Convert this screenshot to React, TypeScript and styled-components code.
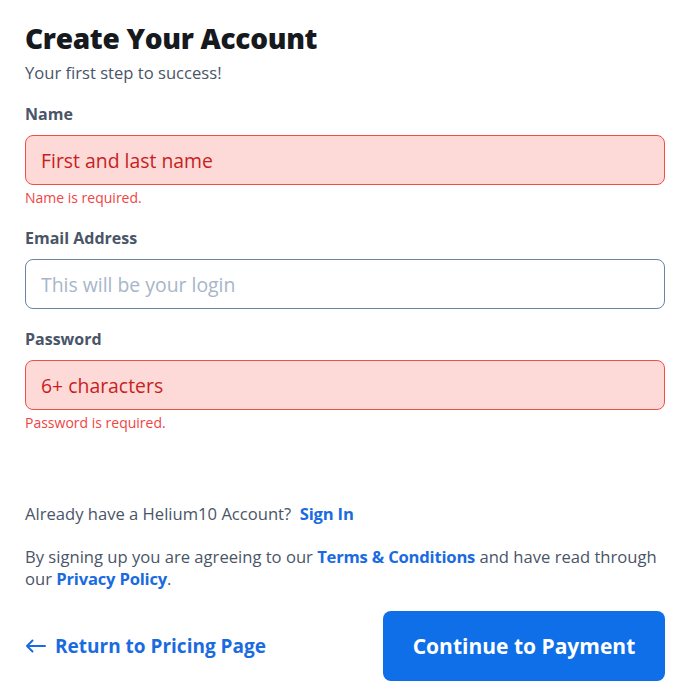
import React from "react";
import styled, { createGlobalStyle } from "styled-components";

const Global = createGlobalStyle`
  html, body { margin: 0; padding: 0; background: #ffffff; }
  body { font-family: "Open Sans", "Noto Sans", sans-serif; -webkit-font-smoothing: antialiased; }
  * { box-sizing: border-box; }
`;

const Page = styled.div`
  width: 691px;
  padding: 20px 26px 0 25px;
  display: flex;
  flex-direction: column;
`;

const Title = styled.h1`
  margin: 0;
  font-size: 28px;
  line-height: 36px;
  font-weight: 800;
  letter-spacing: -0.3px;
  color: #16191d;
`;

const Subtitle = styled.p`
  margin: 6px 0 0;
  font-size: 16.6px;
  line-height: 22px;
  color: #4a5568;
`;

const Form = styled.div`
  margin-top: 19px;
  display: flex;
  flex-direction: column;
`;

const Field = styled.div`
  display: flex;
  flex-direction: column;
  margin-bottom: 19px;
`;

const Label = styled.label`
  font-size: 16px;
  line-height: 22px;
  font-weight: 700;
  color: #4a5568;
  margin-bottom: 10px;
`;

const Input = styled.input<{ $error?: boolean }>`
  width: 100%;
  height: 50px;
  border-radius: 8px;
  border: 1px solid ${(p) => (p.$error ? "#ee5046" : "#6b84a3")};
  background: ${(p) => (p.$error ? "#fddad8" : "#ffffff")};
  padding: 0 15px;
  font-family: inherit;
  font-size: 19.4px;
  color: #2d3748;
  outline: none;
  &::placeholder {
    color: ${(p) => (p.$error ? "#c81e1e" : "#a7b6c8")};
    opacity: 1;
  }
`;

const ErrorText = styled.div`
  margin-top: 3px;
  font-size: 14px;
  line-height: 20px;
  color: #ef4444;
`;

const Text = styled.p<{ $top: number }>`
  margin: ${(p) => p.$top}px 0 0;
  font-size: 16.6px;
  line-height: 22px;
  color: #4a5568;
`;

const Link = styled.a`
  color: #1a6be0;
  font-weight: 700;
  font-size: inherit;
  letter-spacing: -0.2px;
  text-decoration: none;
`;

const Footer = styled.div`
  margin-top: 21px;
  display: flex;
  align-items: center;
  justify-content: space-between;
`;

const BackLink = styled.a`
  display: flex;
  align-items: center;
  gap: 9px;
  color: #1a6be0;
  font-size: 19px;
  font-weight: 700;
  text-decoration: none;
`;

const PrimaryButton = styled.button`
  width: 282px;
  height: 70px;
  border: none;
  border-radius: 8px;
  background: #0e6fe8;
  color: #ffffff;
  font-family: inherit;
  font-size: 21px;
  font-weight: 700;
  cursor: pointer;
`;

export default function App() {
  return (
    <>
      <Global />
      <Page>
        <Title>Create Your Account</Title>
        <Subtitle>Your first step to success!</Subtitle>
        <Form>
          <Field>
            <Label>Name</Label>
            <Input $error placeholder="First and last name" />
            <ErrorText>Name is required.</ErrorText>
          </Field>
          <Field>
            <Label>Email Address</Label>
            <Input placeholder="This will be your login" />
          </Field>
          <Field>
            <Label>Password</Label>
            <Input $error type="password" placeholder="6+ characters" />
            <ErrorText>Password is required.</ErrorText>
          </Field>
        </Form>
        <Text $top={51}>
          Already have a Helium10 Account?&nbsp; <Link href="#">Sign In</Link>
        </Text>
        <Text $top={21}>
          By signing up you are agreeing to our <Link href="#">Terms &amp; Conditions</Link> and have read through our{" "}
          <Link href="#">Privacy Policy</Link>.
        </Text>
        <Footer>
          <BackLink href="#">
            <svg width="21" height="14" viewBox="0 0 21 14" fill="none" stroke="#1a6be0" strokeWidth="2" strokeLinecap="round" strokeLinejoin="round">
              <path d="M20 7H2M7.5 1.5L2 7l5.5 5.5" />
            </svg>
            Return to Pricing Page
          </BackLink>
          <PrimaryButton>Continue to Payment</PrimaryButton>
        </Footer>
      </Page>
    </>
  );
}
